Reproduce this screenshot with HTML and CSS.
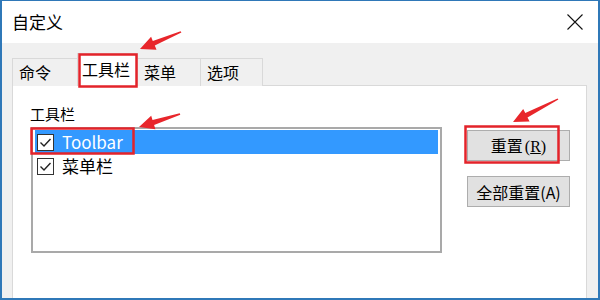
FILE: index.html
```html
<!DOCTYPE html>
<html lang="zh">
<head>
<meta charset="utf-8">
<title>自定义</title>
<link rel="stylesheet" href="styles.css">
</head>
<body>
<div class="window">
  <div class="titlebar">
    <span class="title">自定义</span>
    <svg class="close" width="16" height="16" viewBox="0 0 16 16"><path d="M0.5 0.5 L15.5 15.5 M15.5 0.5 L0.5 15.5" stroke="#111" stroke-width="1.1" fill="none"/></svg>
  </div>
  <div class="body">
    <div class="tabs">
      <div class="tab">命令</div>
      <div class="tab active">工具栏</div>
      <div class="tab">菜单</div>
      <div class="tab">选项</div>
    </div>
    <div class="panel">
      <div class="list-col">
        <div class="label">工具栏</div>
        <div class="listbox">
          <div class="row selected">
            <span class="check"><svg width="17" height="17" viewBox="0 0 17 17"><rect x="0.5" y="0.5" width="16" height="16" fill="#fff" stroke="#333"/><path d="M3.5 8.5 L7 12 L13.5 5" fill="none" stroke="#222" stroke-width="1.4"/></svg></span>
            <span class="item-text latin">Toolbar</span>
          </div>
          <div class="row">
            <span class="check"><svg width="17" height="17" viewBox="0 0 17 17"><rect x="0.5" y="0.5" width="16" height="16" fill="#fff" stroke="#333"/><path d="M3.5 8.5 L7 12 L13.5 5" fill="none" stroke="#222" stroke-width="1.4"/></svg></span>
            <span class="item-text">菜单栏</span>
          </div>
        </div>
      </div>
      <div class="btn-col">
        <button class="btn">重置<span class="mnemonic">(<u>R</u>)</span></button>
        <button class="btn">全部重置(A)</button>
      </div>
    </div>
  </div>
  <svg class="annotations" width="600" height="300" viewBox="0 0 600 300">
    <g fill="none" stroke="#e3232a" stroke-width="2.5">
      <rect x="79.5" y="54.5" width="57" height="32"/>
      <rect x="31.5" y="128.5" width="102" height="25"/>
      <rect x="465.5" y="126.5" width="93" height="36"/>
    </g>
    <g fill="#e8262b">
      <polygon points="140,49 156.5,49.8 154.8,45.6 181.4,32.6 180.6,31.2 152.8,41 151.1,36.8"/>
      <polygon points="139,127 155.4,129.2 154.1,124.9 180.3,114.7 179.7,113.3 152.5,120.1 151.2,115.8"/>
      <polygon points="513,122 529.6,121.4 527.5,117.4 558.4,99.6 557.6,98.4 525.3,113 523.2,109"/>
    </g>
  </svg>
</div>
</body>
</html>
```

FILE: styles.css
```css
* { box-sizing: border-box; }

html, body {
  margin: 0;
  padding: 0;
  background: #fff;
}

body {
  font-family: "Noto Sans CJK SC", "Noto Sans", sans-serif;
  color: #000;
}

.window {
  position: relative;
  width: 600px;
  height: 300px;
  border: 2px solid #2f78b8;
  border-top-width: 1px;
  display: flex;
  flex-direction: column;
  background: #f0f0f0;
}

.titlebar {
  height: 42px;
  flex: none;
  background: #fff;
  display: flex;
  align-items: center;
  padding-left: 10px;
  padding-right: 15px;
}

.title {
  font-size: 17px;
  line-height: 22px;
}

.close {
  margin-left: auto;
  display: block;
}

.body {
  flex: 1;
  display: flex;
  flex-direction: column;
  background: #f0f0f0;
  padding: 10px 11px 0 10px;
}

.tabs {
  display: grid;
  grid-template-columns: 65px 60px 63px 62px;
  align-items: end;
  height: 33px;
  margin-left: 1px;
  margin-bottom: -1px;
  position: relative;
  z-index: 1;
}

.tab {
  height: 28px;
  border: 1px solid #d9d9d9;
  border-bottom: none;
  margin-left: -1px;
  background: #f0f0f0;
  font-size: 16px;
  line-height: 27px;
  padding-left: 6px;
  white-space: nowrap;
}

.tab.active {
  height: 33px;
  background: #fff;
  line-height: 31px;
  padding-left: 4px;
}

.panel {
  flex: 1;
  background: #fff;
  border: 1px solid #d9d9d9;
  border-bottom: none;
  display: flex;
  align-items: flex-start;
  padding: 18px 16px 0 17px;
}

.list-col {
  width: 414px;
  display: flex;
  flex-direction: column;
}

.label {
  font-size: 15px;
  line-height: 20px;
}

.listbox {
  margin-top: 3px;
  margin-left: 1px;
  height: 126px;
  border: 2px solid #a9a9a9;
  padding: 1px 2px;
}

.row {
  height: 24px;
  display: flex;
  align-items: center;
  padding-left: 2px;
  gap: 8px;
}

.row.selected {
  background: #3399ff;
  color: #fff;
}

.check {
  display: block;
  width: 17px;
  height: 17px;
}

.check svg {
  display: block;
}

.item-text {
  font-size: 17px;
  line-height: 24px;
}

.btn-col {
  margin-left: 25px;
  padding-top: 26px;
  display: flex;
  flex-direction: column;
  gap: 15px;
}

.btn {
  width: 103px;
  height: 31px;
  background: #e1e1e1;
  border: 1px solid #adadad;
  font-family: "Noto Sans CJK SC", "Noto Sans", sans-serif;
  font-size: 16px;
  line-height: 20px;
  color: #000;
  padding: 0;
  margin: 0;
}

.mnemonic {
  font-family: "Liberation Serif", serif;
  font-size: 16px;
  margin-left: 2px;
}

.annotations {
  position: absolute;
  left: -2px;
  top: -1px;
  z-index: 10;
  pointer-events: none;
}
```
